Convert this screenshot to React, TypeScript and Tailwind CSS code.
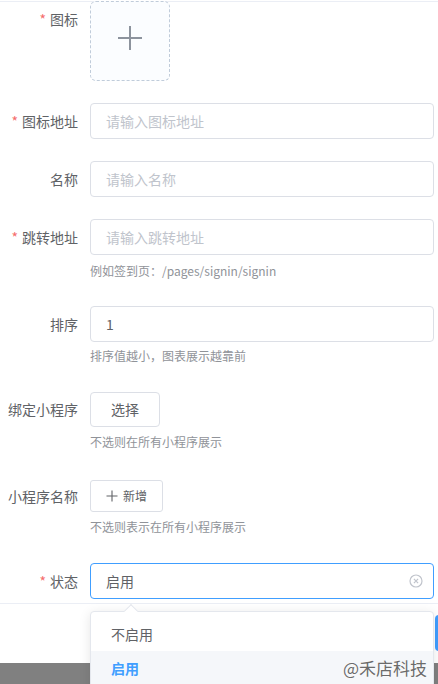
import React from "react";

const font = { fontFamily: '"Noto Sans CJK SC", "Noto Sans", sans-serif' };

function Label({ text, required }: { text: string; required?: boolean }) {
  return (
    <div className="w-[78px] shrink-0 text-right text-[14px] leading-[36px] text-[#606266] pr-0">
      {required && <span className="text-[#f56c6c] mr-[4px]">*</span>}
      {text}
    </div>
  );
}

function Input({ placeholder, value }: { placeholder?: string; value?: string }) {
  return (
    <div className="h-[36px] w-full rounded-[4px] border border-[#dcdfe6] bg-white px-[15px] flex items-center text-[14px]">
      {value ? (
        <span className="text-[#606266]">{value}</span>
      ) : (
        <span className="text-[#c0c4cc]">{placeholder}</span>
      )}
    </div>
  );
}

function Helper({ text, pt }: { text: string; pt: string }) {
  return <div className={`h-[29px] ${pt} text-[12px] leading-[18px] text-[#909399]`}>{text}</div>;
}

export default function App() {
  return (
    <div className="relative w-[438px] h-[684px] overflow-hidden bg-white" style={font}>
      <div className="absolute left-0 right-0 top-[1px] h-px bg-[#ebeef5]" />
      <div className="relative flex flex-col pr-[4px]">
        {/* 图标 */}
        <div className="mt-[1px] flex gap-[12px]">
          <Label text="图标" required />
          <div className="h-[80px] w-[80px] rounded-[6px] border border-dashed border-[#c0ccda] bg-[#fbfdff] flex justify-center pt-[23px]">
            <svg width="26" height="26" viewBox="0 0 26 26">
              <path d="M13 1v24M1 13h24" stroke="#8c939d" strokeWidth="2" fill="none" />
            </svg>
          </div>
        </div>
        {/* 图标地址 */}
        <div className="mt-[22px] flex gap-[12px]">
          <Label text="图标地址" required />
          <Input placeholder="请输入图标地址" />
        </div>
        {/* 名称 */}
        <div className="mt-[22px] flex gap-[12px]">
          <Label text="名称" />
          <Input placeholder="请输入名称" />
        </div>
        {/* 跳转地址 */}
        <div className="mt-[22px] flex gap-[12px]">
          <Label text="跳转地址" required />
          <div className="flex-1 flex flex-col">
            <Input placeholder="请输入跳转地址" />
            <Helper text="例如签到页：/pages/signin/signin" pt="pt-[7px]" />
          </div>
        </div>
        {/* 排序 */}
        <div className="mt-[22px] flex gap-[12px]">
          <Label text="排序" />
          <div className="flex-1 flex flex-col">
            <Input value="1" />
            <Helper text="排序值越小，图表展示越靠前" pt="pt-[5px]" />
          </div>
        </div>
        {/* 绑定小程序 */}
        <div className="mt-[21px] flex gap-[12px]">
          <div className="w-[78px] shrink-0 text-right text-[14px] leading-[35px] text-[#606266]">绑定小程序</div>
          <div className="flex-1 flex flex-col items-start">
            <div className="h-[35px] w-[70px] rounded-[4px] border border-[#dcdfe6] flex items-center justify-center text-[14px] text-[#606266]">
              选择
            </div>
            <Helper text="不选则在所有小程序展示" pt="pt-[6px]" />
          </div>
        </div>
        {/* 小程序名称 */}
        <div className="mt-[24px] flex gap-[12px]">
          <div className="w-[78px] shrink-0 text-right text-[14px] leading-[32px] text-[#606266]">小程序名称</div>
          <div className="flex-1 flex flex-col items-start">
            <div className="h-[32px] w-[73px] rounded-[3px] border border-[#dcdfe6] flex items-center justify-center gap-[5px] text-[12px] text-[#606266]">
              <svg width="12" height="12" viewBox="0 0 12 12">
                <path d="M6 0.5v11M0.5 6h11" stroke="#606266" strokeWidth="1.1" fill="none" />
              </svg>
              <span>新增</span>
            </div>
            <Helper text="不选则表示在所有小程序展示" pt="pt-[6px]" />
          </div>
        </div>
        {/* 状态 */}
        <div className="mt-[22px] flex gap-[12px]">
          <Label text="状态" required />
          <div className="h-[36px] w-full rounded-[4px] border border-[#409eff] bg-white pl-[15px] pr-[10px] flex items-center justify-between text-[14px]">
            <span className="text-[#606266]">启用</span>
            <svg width="14" height="14" viewBox="0 0 14 14">
              <circle cx="7" cy="7" r="6" stroke="#c0c4cc" strokeWidth="1.2" fill="none" />
              <path d="M4.9 4.9l4.2 4.2M9.1 4.9l-4.2 4.2" stroke="#c0c4cc" strokeWidth="1.2" />
            </svg>
          </div>
        </div>
      </div>
      {/* footer */}
      <div className="mt-[4px] h-[60px] border-t border-[#ebeef5] bg-white relative">
        <div className="absolute left-[435px] top-[11px] h-[36px] w-[40px] rounded-[4px] bg-[#409eff]" />
      </div>
      {/* overlay */}
      <div className="h-[21px] bg-[#808080] shadow-[0_-2px_4px_rgba(0,0,0,0.15)]" />

      {/* dropdown */}
      <div className="absolute left-[90px] top-[611px] w-[344px] h-[90px] rounded-[4px] border border-[#e4e7ed] bg-white shadow-[0_2px_12px_0_rgba(0,0,0,0.1)] py-[5px]">
        <div className="absolute -top-[6px] left-[35px] h-[10px] w-[10px] rotate-45 border-l border-t border-[#e4e7ed] bg-white" />
        <div className="relative h-[34px] px-[20px] flex items-center text-[14px] text-[#606266]">不启用</div>
        <div className="relative h-[34px] px-[20px] flex items-center text-[14px] font-bold text-[#409eff] bg-[#f5f7fa]">启用</div>
      </div>

      {/* watermark */}
      <div className="absolute left-[343px] top-[656px] text-[17px] leading-[24px] text-[#6b6b6b] [text-shadow:0_0_2px_#fff,0_0_1px_#fff]">
        @禾店科技
      </div>
    </div>
  );
}
